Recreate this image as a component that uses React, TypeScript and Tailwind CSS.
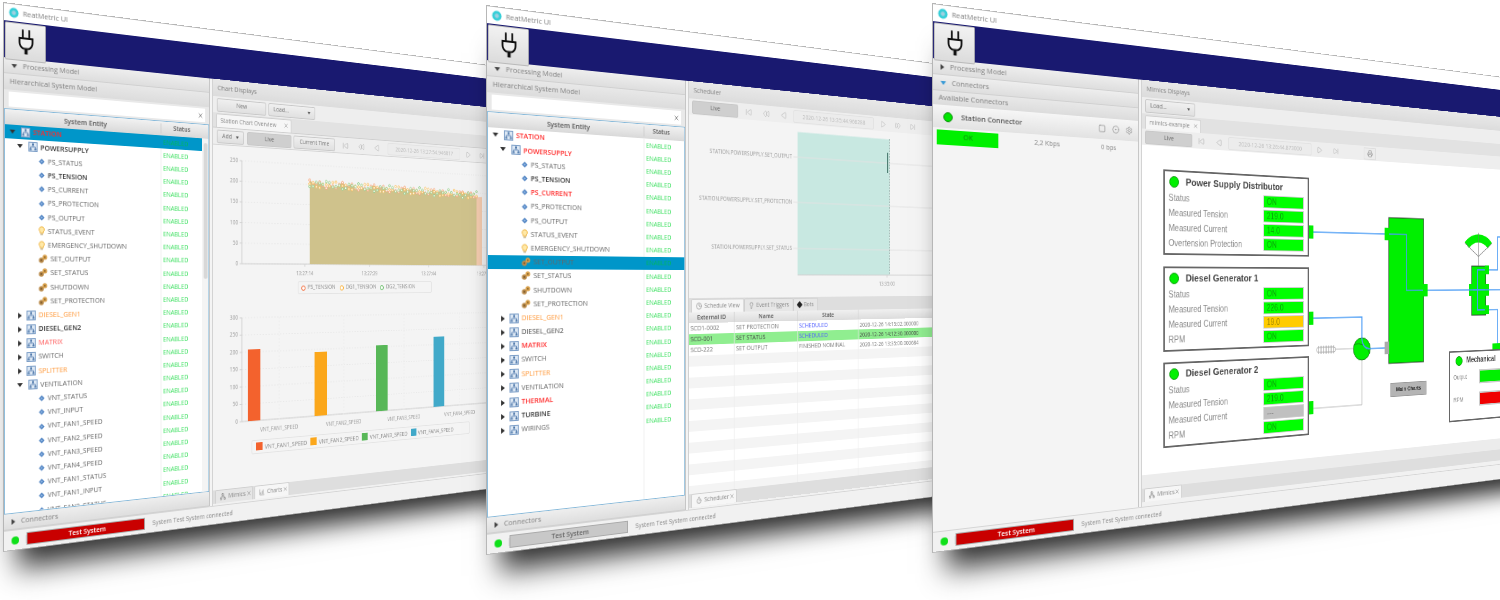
import type { ReactNode } from "react";
import {
  ChartColumnIncreasing,
  CircleDot,
  Clock,
  Lightbulb,
  Network,
  Play,
  Printer,
  Rewind,
  Settings,
  SkipForward,
  Square,
  Timer,
  X,
} from "lucide-react";

type Row = {
  label: string;
  level: number;
  icon: "sys" | "par" | "evt" | "cmd";
  open?: boolean;
  color?: string;
  bold?: boolean;
};

const sys = (label: string, extra: Partial<Row> = {}): Row => ({ label, level: 1, icon: "sys", ...extra });
const par = (label: string, extra: Partial<Row> = {}): Row => ({ label, level: 2, icon: "par", ...extra });

const powerRows = (powerColor: string, currentColor?: string): Row[] => [
  sys("POWERSUPPLY", { open: true, color: powerColor, bold: true }),
  par("PS_STATUS"),
  par("PS_TENSION", { bold: true, color: "#333" }),
  par("PS_CURRENT", currentColor ? { bold: true, color: currentColor } : {}),
  par("PS_PROTECTION"),
  par("PS_OUTPUT"),
  par("STATUS_EVENT", { icon: "evt" }),
  par("EMERGENCY_SHUTDOWN", { icon: "evt" }),
  par("SET_OUTPUT", { icon: "cmd" }),
  par("SET_STATUS", { icon: "cmd" }),
  par("SHUTDOWN", { icon: "cmd" }),
  par("SET_PROTECTION", { icon: "cmd" }),
];

const treeOne: Row[] = [
  { label: "STATION", level: 0, icon: "sys", open: true, color: "#ff2a2a", bold: true },
  ...powerRows("#333"),
  sys("DIESEL_GEN1", { color: "#ff9a3c" }),
  sys("DIESEL_GEN2", { color: "#333", bold: true }),
  sys("MATRIX", { color: "#ff5a5a" }),
  sys("SWITCH"),
  sys("SPLITTER", { color: "#ff9a3c" }),
  sys("VENTILATION", { open: true }),
  par("VNT_STATUS"),
  par("VNT_INPUT"),
  par("VNT_FAN1_SPEED"),
  par("VNT_FAN2_SPEED"),
  par("VNT_FAN3_SPEED"),
  par("VNT_FAN4_SPEED"),
  par("VNT_FAN1_STATUS"),
  par("VNT_FAN1_INPUT"),
  par("VNT_FAN2_STATUS"),
];

const treeTwo: Row[] = [
  { label: "STATION", level: 0, icon: "sys", open: true, color: "#ff2a2a", bold: true },
  ...powerRows("#ff2a2a", "#ff2a2a"),
  sys("DIESEL_GEN1", { color: "#ff9a3c" }),
  sys("DIESEL_GEN2", { color: "#444" }),
  sys("MATRIX", { color: "#ff2a2a", bold: true }),
  sys("SWITCH"),
  sys("SPLITTER", { color: "#ff9a3c" }),
  sys("VENTILATION"),
  sys("THERMAL", { color: "#ff2a2a", bold: true }),
  sys("TURBINE", { color: "#333", bold: true }),
  sys("WIRINGS"),
];

function RowIcon({ kind }: { kind: Row["icon"] }) {
  if (kind === "sys") {
    return (
      <svg width="10" height="10" viewBox="0 0 10 10" className="shrink-0">
        <rect x="0.5" y="0.5" width="9" height="9" fill="#dde8f4" stroke="#7d9fc8" />
        <path d="M5 2v3M2.5 7.5V5h5v2.5" fill="none" stroke="#5a82b2" strokeWidth="0.8" />
        <rect x="1.5" y="6.5" width="2" height="2" fill="#4f78aa" />
        <rect x="6.5" y="6.5" width="2" height="2" fill="#4f78aa" />
        <rect x="4" y="1.5" width="2" height="2" fill="#4f78aa" />
      </svg>
    );
  }
  if (kind === "par") {
    return (
      <svg width="7" height="7" viewBox="0 0 8 8" className="shrink-0">
        <path d="M4 0.5 7.5 4 4 7.5 0.5 4z" fill="#4a7fc0" />
        <circle cx="4" cy="4" r="1.2" fill="#9cc0e8" />
      </svg>
    );
  }
  if (kind === "evt") {
    return (
      <svg width="7" height="10" viewBox="0 0 8 11" className="shrink-0">
        <path d="M4 0.7a3.3 3.3 0 0 0-2 5.9V8h4V6.6a3.3 3.3 0 0 0-2-5.9z" fill="#ffe9a8" stroke="#eeb13c" />
        <rect x="2.4" y="8.6" width="3.2" height="1.8" fill="#c9b892" />
      </svg>
    );
  }
  return (
    <svg width="10" height="9" viewBox="0 0 11 10" className="shrink-0">
      <circle cx="3.4" cy="6.6" r="3" fill="#b98a4a" />
      <circle cx="7.6" cy="3.2" r="2.8" fill="#d9a04a" />
      <circle cx="3.4" cy="6.6" r="1" fill="#6e5128" />
      <circle cx="7.6" cy="3.2" r="0.9" fill="#7d5c2b" />
    </svg>
  );
}

function Tree({ rows, selected, scrollbar }: { rows: Row[]; selected: number; scrollbar?: boolean }) {
  return (
    <div className="flex h-[409px] flex-col overflow-hidden border-[1.5px] border-[#86b9da] bg-white">
      <div className="flex h-[15px] shrink-0 items-center bg-gradient-to-b from-[#f1f1f1] to-[#d9d9d9] font-semibold text-[#555]">
        <div className="w-[177px] text-center text-[7.5px]">System Entity</div>
        <div className="flex-1 border-l border-[#ccc] pr-[8px] text-center text-[7px]">Status</div>
      </div>
      <div className="flex min-h-0 flex-1">
        <div className="relative min-w-0 flex-1 overflow-hidden">
          <div className="absolute top-0 bottom-0 left-[177px] border-l border-[#eeeeee]" />
          {rows.map((row, i) => (
            <div key={row.label + i} className={`relative flex h-[14.2px] items-center ${i === selected ? "bg-[#0096c9]" : ""}`}>
              <div className="flex w-[177px] shrink-0 items-center">
                <div className={row.level === 0 ? "w-[5px]" : row.level === 1 ? "w-[13px]" : "w-[36px]"} />
                {row.icon === "sys" && (
                  <span className={`h-0 w-0 border-transparent ${row.open ? "mr-[6px] border-x-[3px] border-t-[4px] border-t-[#333]" : "mr-[5px] ml-[1px] border-y-[3px] border-l-[4px] border-l-[#333]"}`} />
                )}
                <RowIcon kind={row.icon} />
                <span
                  className={`ml-[3px] whitespace-nowrap text-[7.5px] ${row.bold ? "font-semibold" : ""}`}
                  style={{ color: row.color ?? "#666" }}
                >
                  {row.label}
                </span>
              </div>
              <span className={`ml-[3px] text-[7.2px] ${i === selected ? "text-[#00b85c]" : "text-[#3fe062]"}`}>ENABLED</span>
            </div>
          ))}
        </div>
        {scrollbar && (
          <div className="flex w-[8px] shrink-0 flex-col items-center bg-[#f4f4f4] py-[5px]">
            <div className="h-[150px] w-[5px] rounded-full bg-[#d8d8d8]" />
          </div>
        )}
      </div>
    </div>
  );
}

function Bar({ label, open, blue }: { label: string; open?: boolean; blue?: boolean }) {
  return (
    <div className="flex h-[16px] shrink-0 items-center gap-[6px] border-b border-[#d0d0d0] bg-gradient-to-b from-[#eeeeee] to-[#dedede] pl-[8px] text-[7.6px] text-[#808080]">
      <span
        className={`h-0 w-0 border-transparent ${
          open
            ? `border-x-[3px] border-t-[4px] ${blue ? "border-t-[#3b9bd6]" : "border-t-[#444]"}`
            : "border-y-[3px] border-l-[4px] border-l-[#444]"
        }`}
      />
      {label}
    </div>
  );
}

function Head({ label, h = "h-[16px]" }: { label: string; h?: string }) {
  return <div className={`${h} flex shrink-0 items-center bg-gradient-to-b from-[#e8e8e8] to-[#dcdcdc] pl-[6px] text-[7.8px] text-[#808080]`}>{label}</div>;
}

function Btn({ label, className = "", dark }: { label: string; className?: string; dark?: boolean }) {
  return (
    <div
      className={`flex h-[15px] shrink-0 items-center justify-center rounded-[2px] border border-[#c8c8c8] text-[7px] ${
        dark ? "bg-[#cfcfcf] text-[#666]" : "bg-gradient-to-b from-[#f0f0f0] to-[#e0e0e0] text-[#777]"
      } ${className}`}
    >
      {label}
    </div>
  );
}

function Drop({ label, className = "" }: { label: string; className?: string }) {
  return (
    <div className={`flex h-[15px] shrink-0 items-center justify-between rounded-[2px] border border-[#c8c8c8] bg-gradient-to-b from-[#f0f0f0] to-[#e0e0e0] px-[6px] text-[7px] text-[#777] ${className}`}>
      {label}
      <span className="h-0 w-0 border-x-[2.5px] border-t-[3px] border-transparent border-t-[#555]" />
    </div>
  );
}

function Tool({ children, className = "w-[24px]" }: { children: ReactNode; className?: string }) {
  return <div className={`flex h-[15px] shrink-0 items-center justify-center text-[#999] ${className}`}>{children}</div>;
}

function DateBox({ text, className }: { text: string; className: string }) {
  return (
    <div className={`flex h-[15px] shrink-0 items-center justify-center rounded-[2px] border border-[#e2e2e2] bg-[#ececec] text-[7.2px] whitespace-nowrap text-[#bcbcbc] ${className}`}>
      {text}
    </div>
  );
}

const ic = { size: 9, strokeWidth: 1.2 };

function SeekBack({ double, w }: { double?: boolean; w?: string }) {
  return <Tool className={w}>{double ? <Rewind {...ic} /> : <Play {...ic} className="rotate-180" />}</Tool>;
}

function Tab({ label, icon, active, className = "h-full" }: { label: string; icon?: ReactNode; active?: boolean; className?: string }) {
  return (
    <div
      className={`flex items-center gap-[3px] whitespace-nowrap rounded-t-[2px] border-x border-t border-[#cfcfcf] px-[5px] text-[7px] text-[#888] ${
        active ? "bg-[#f6f6f6]" : "bg-[#e6e6e6]"
      } ${className}`}
    >
      {icon}
      {label}
    </div>
  );
}

function Close() {
  return <X size={7} strokeWidth={1.8} className="text-[#666]" />;
}

function AppWindow({
  place,
  sidebar,
  right,
  sideClass,
  status,
}: {
  place: string;
  sidebar: ReactNode;
  right: ReactNode;
  sideClass: string;
  status: "red" | "grey";
}) {
  return (
    <div className={`absolute flex h-[550px] w-[1000px] origin-left flex-col border border-[#b5b5b5] bg-[#f4f4f4] shadow-[0_34px_28px_-16px_rgba(0,0,0,0.82)] ${place}`}>
      <div className="flex h-[17px] shrink-0 items-center gap-[4px] bg-white pl-[5px] text-[7.8px] text-[#808080]">
        <svg width="11" height="11" viewBox="0 0 12 12">
          <circle cx="6" cy="6" r="5.4" fill="#37cfd8" />
          <circle cx="6" cy="6" r="2.4" fill="#9fd0e0" />
        </svg>
        ReatMetric UI
      </div>
      <div className="h-[37px] shrink-0 bg-[#191970]">
        <div className="relative z-10 mt-[1px] ml-[1px] flex h-[38px] w-[44px] items-center justify-center rounded-[1px] border border-[#bbb] bg-gradient-to-b from-[#f2f2f2] to-[#dcdcdc]">
          <svg width="17" height="26" viewBox="0 0 17 26" fill="none" stroke="#111" strokeWidth="1.9">
            <path d="M5 1v8M12 1v8" strokeLinecap="round" />
            <path d="M1.5 9h14v4a7 7 0 0 1-4 6.4h-6A7 7 0 0 1 1.5 13z" fill="#f0f0f0" />
            <path d="M8.5 19v6" strokeWidth="3.4" />
          </svg>
        </div>
      </div>
      <div className="flex min-h-0 flex-1">
        <div className={`flex shrink-0 flex-col border-r border-[#c4c4c4] bg-[#e9e9e9] ${sideClass}`}>{sidebar}</div>
        <div className="ml-[3px] flex min-w-0 flex-1 flex-col border-l border-[#cfcfcf] bg-[#eeeeee]">{right}</div>
      </div>
      <div className="flex h-[20px] shrink-0 items-center border-t border-[#d5d5d5] bg-[#f1f1f1]">
        <div className="flex w-[24px] justify-center border-r border-[#dcdcdc]">
          <div className="size-[8px] rounded-full bg-[#0fe01a]" />
        </div>
        <div
          className={`flex h-[13px] w-[135px] items-center justify-center border border-[#aaa] text-[7.4px] font-semibold ${
            status === "red" ? "bg-[#c90000] text-white" : "bg-[#c8c8c8] text-[#666]"
          }`}
        >
          Test System
        </div>
        <div className="ml-[9px] text-[7.1px] text-[#888]">System Test System connected</div>
      </div>
    </div>
  );
}

function Sidebar({ rows, selected, scrollbar }: { rows: Row[]; selected: number; scrollbar?: boolean }) {
  return (
    <>
      <Bar label="Processing Model" open />
      <Head label="Hierarchical System Model" />
      <div className="flex h-[19px] shrink-0 items-center px-[5px]">
        <div className="flex h-[15px] flex-1 items-center justify-end bg-white pr-[2px]">
          <X size={8} strokeWidth={2} className="text-[#555]" />
        </div>
      </div>
      <Tree rows={rows} selected={selected} scrollbar={scrollbar} />
      <Bar label="Connectors" />
    </>
  );
}

function wave(i: number, seed: number) {
  return 203 + 5 * Math.sin(i * 0.63 + seed) + 5 * Math.sin(i * 1.9 + seed * 2) - i * 0.15;
}

const xs = Array.from({ length: 56 }, (_, i) => 376 + i * 4.8);
const yVal = (v: number) => 259 - v * 0.464;
const AXIS = "#d0d0d0";

function ChartOne() {
  const area = xs.map((x, i) => `${x},${yVal(wave(i, 1))}`).join(" ");
  const series = [
    { seed: 1, color: "#f79a72" },
    { seed: 3, color: "#fbb94e" },
    { seed: 5, color: "#86cc86" },
  ];
  return (
    <svg width="756" height="150" viewBox="244 127 756 150" className="shrink-0 text-[6.2px]" fontFamily="Open Sans, sans-serif">
      {[0, 50, 100, 150, 200, 250].map((v) => (
        <g key={v}>
          <line x1="282" x2="1000" y1={yVal(v)} y2={yVal(v)} stroke="#e9e9e9" strokeDasharray="2 2" />
          <text x="277" y={yVal(v) + 2} textAnchor="end" fill="#999">{v}</text>
          <line x1="279" x2="282" y1={yVal(v)} y2={yVal(v)} stroke={AXIS} />
        </g>
      ))}
      <line x1="282" x2="282" y1="143" y2="259" stroke={AXIS} />
      <line x1="282" x2="1000" y1="259" y2="259" stroke={AXIS} />
      {[369, 465, 559, 653].map((x, i) => (
        <g key={x}>
          <line x1={x} x2={x} y1="259" y2="262" stroke={AXIS} />
          <text x={x} y="272" textAnchor="middle" fill="#999">{["13:27:14", "13:27:29", "13:27:44", "13:27:59"][i]}</text>
        </g>
      ))}
      <polygon points={`376,259 ${area} 650,${yVal(190)} 650,259`} fill="#f6cdb0" />
      <polygon points={`376,259 ${area} 640,259`} fill="#cfc28c" />
      {series.map((s) =>
        xs.map((x, i) => (
          <circle key={s.seed + "-" + i} cx={x} cy={yVal(wave(i, s.seed))} r="1.5" fill="#fbf6e8" stroke={s.color} strokeWidth="0.8" />
        )),
      )}
    </svg>
  );
}

const bars = [
  { x: 290, w: 17, top: 357, color: "#f3622d" },
  { x: 383, w: 18, top: 363, color: "#fba71b" },
  { x: 475, w: 18, top: 358, color: "#57b757" },
  { x: 567, w: 18, top: 350, color: "#41a9c9" },
];

function ChartTwo() {
  return (
    <svg width="756" height="156" viewBox="244 304 756 156" className="shrink-0 text-[6.4px]" fontFamily="Open Sans, sans-serif">
      {[0, 50, 100, 150, 200, 250, 300].map((v) => {
        const y = 438 - v * 0.39;
        return (
          <g key={v}>
            <line x1="282" x2="1000" y1={y} y2={y} stroke="#e9e9e9" strokeDasharray="2 2" />
            <text x="277" y={y + 2} textAnchor="end" fill="#999">{v}</text>
            <line x1="279" x2="282" y1={y} y2={y} stroke={AXIS} />
          </g>
        );
      })}
      <line x1="282" x2="282" y1="321" y2="438" stroke={AXIS} />
      <line x1="282" x2="1000" y1="438" y2="438" stroke={AXIS} />
      {[333, 426, 519, 611].map((x, i) => (
        <g key={x}>
          <line x1={x} x2={x} y1="321" y2="441" stroke="#ececec" strokeDasharray="2 2" />
          <text x={x} y="451" textAnchor="middle" fill="#999">{`VNT_FAN${i + 1}_SPEED`}</text>
        </g>
      ))}
      {bars.map((b) => (
        <rect key={b.x} x={b.x} y={b.top} width={b.w} height={438 - b.top} fill={b.color} />
      ))}
    </svg>
  );
}

function ChartsRight() {
  return (
    <>
      <Head label="Chart Displays" h="h-[19px]" />
      <div className="flex h-[18px] shrink-0 items-center gap-[3px] pl-[5px]">
        <Btn label="New" className="w-[66px]" />
        <Drop label="Load..." className="w-[66px]" />
      </div>
      <div className="flex h-[17px] shrink-0 items-end border-b border-[#cfcfcf] bg-[#e2e2e2] pl-[4px]">
        <Tab active label="Station Chart Overview" className="h-[15px] w-[102px]" icon={null} />
        <div className="-ml-[11px] mb-[4px]"><Close /></div>
      </div>
      <div className="flex h-[18px] shrink-0 items-center pl-[5px]">
        <Drop label="Add" className="w-[36px]" />
        <Btn dark label="Live" className="ml-[4px] w-[61px]" />
        <Btn label="Current Time" className="ml-[3px] w-[60px]" />
        <Tool className="ml-[3px] w-[24px]"><SkipForward {...ic} className="rotate-180" /></Tool>
        <SeekBack double w="w-[24px]" />
        <SeekBack w="w-[24px]" />
        <DateBox text="2020-12-26 13:27:54.946817" className="ml-[5px] w-[119px]" />
        <Tool className="ml-[1px] w-[24px]"><Play {...ic} /></Tool>
        <Tool><SkipForward {...ic} /></Tool>
      </div>
      <div className="flex min-h-0 flex-1 flex-col overflow-hidden border-t border-[#d5d5d5] bg-[#f4f4f4]">
        <ChartOne />
        <div className="mt-[2px] mb-[9px] ml-[115px] flex h-[15px] w-[205px] shrink-0 items-center gap-[6px] rounded-[2px] border border-[#e4e4e4] px-[4px] text-[7px] text-[#888]">
          {[
            ["PS_TENSION", "border-[#f3622d]"],
            ["DG1_TENSION", "border-[#fba71b]"],
            ["DG2_TENSION", "border-[#57b757]"],
          ].map(([name, color]) => (
            <span key={name} className="flex items-center gap-[3px]">
              <span className={`size-[6px] rounded-full border-[1.5px] bg-white ${color}`} />
              {name}
            </span>
          ))}
        </div>
        <ChartTwo />
        <div className="ml-[51px] flex h-[16px] w-[333px] shrink-0 items-center gap-[5px] rounded-[2px] border border-[#e4e4e4] px-[5px] text-[7.2px] text-[#888]">
          {[
            ["VNT_FAN1_SPEED", "bg-[#f3622d]"],
            ["VNT_FAN2_SPEED", "bg-[#fba71b]"],
            ["VNT_FAN3_SPEED", "bg-[#57b757]"],
            ["VNT_FAN4_SPEED", "bg-[#41a9c9]"],
          ].map(([name, color]) => (
            <span key={name} className="flex items-center gap-[3px]">
              <span className={`size-[9px] ${color}`} />
              {name}
            </span>
          ))}
        </div>
      </div>
      <div className="flex h-[15px] shrink-0 gap-[1px] bg-[#dedede] pl-[3px]">
        <Tab label="Mimics" icon={<Network size={8} />} className="h-full w-[50px]" />
        <div className="-ml-[10px] flex items-center"><Close /></div>
        <Tab active label="Charts" icon={<ChartColumnIncreasing size={8} />} className="ml-[3px] h-full w-[48px]" />
        <div className="-ml-[10px] flex items-center"><Close /></div>
      </div>
      <div className="h-[2px] shrink-0 bg-[#f1f1f1]" />
    </>
  );
}

function Gantt() {
  const rows = [
    { y: 131, label: "STATION.POWERSUPPLY.SET_OUTPUT" },
    { y: 184, label: "STATION.POWERSUPPLY.SET_PROTECTION" },
    { y: 238, label: "STATION.POWERSUPPLY.SET_STATUS" },
  ];
  return (
    <svg width="765" height="203" viewBox="235 92 765 203" className="shrink-0 bg-[#f4f4f4] text-[6.4px]" fontFamily="Open Sans, sans-serif">
      <rect x="383" y="101.5" width="140" height="167.5" fill="#c8e8e1" />
      {rows.map((r) => (
        <g key={r.y}>
          <line x1="377" x2="1000" y1={r.y} y2={r.y} stroke="#e2e2e2" />
          <text x="375" y={r.y + 2} textAnchor="end" fill="#999">{r.label}</text>
        </g>
      ))}
      <line x1="523" x2="523" y1="101" y2="269" stroke="#6e8f88" strokeDasharray="2 1.5" />
      <rect x="519" y="118" width="2" height="25" fill="#4f7f74" />
      <line x1="383" x2="1000" y1="269" y2="269" stroke="#d0d0d0" />
      <line x1="519" x2="519" y1="269" y2="272" stroke="#d0d0d0" />
      <text x="519" y="282" textAnchor="middle" fill="#999">13:35:00</text>
    </svg>
  );
}

const schedule = [
  { id: "SCD1-0002", name: "SET PROTECTION", state: "SCHEDULED", start: "2020-12-26 14:15:02.000000" },
  { id: "SCD-001", name: "SET STATUS", state: "SCHEDULED", start: "2020-12-26 14:12:30.000000", hit: true },
  { id: "SCD-222", name: "SET OUTPUT", state: "FINISHED NOMINAL", start: "2020-12-26 13:35:00.000684" },
];

function SchedulerRight() {
  const blanks = Array.from({ length: 13 });
  return (
    <>
      <Head label="Scheduler" h="h-[19px]" />
      <div className="flex h-[18px] shrink-0 items-center pl-[4px]">
        <Btn dark label="Live" className="w-[61px]" />
        <Tool className="ml-[2px] w-[24px]"><SkipForward {...ic} className="rotate-180" /></Tool>
        <SeekBack double w="w-[25px]" />
        <SeekBack w="w-[24px]" />
        <DateBox text="2020-12-26 13:35:44.966288" className="ml-[2px] w-[121px]" />
        <Tool className="ml-[2px] w-[24px]"><Play {...ic} /></Tool>
        <Tool><Rewind {...ic} className="rotate-180" /></Tool>
        <Tool><SkipForward {...ic} /></Tool>
      </div>
      <Gantt />
      <div className="flex h-[16px] shrink-0 items-end bg-[#dedede] pl-[3px]">
        <Tab active label="Schedule View" className="h-[15px]" icon={<Clock size={8} />} />
        <Tab label="Event Triggers" className="h-[15px]" icon={<Lightbulb size={8} />} />
        <Tab label="Bots" className="h-[15px]" icon={<span className="size-[6px] rotate-45 bg-[#222]" />} />
      </div>
      <div className="grid h-[12px] shrink-0 grid-cols-[60px_88px_91px_1fr] bg-gradient-to-b from-[#f0f0f0] to-[#dcdcdc] text-center text-[7.2px] font-semibold text-[#555]">
        {["External ID", "Name", "State", "Start Time"].map((h) => (
          <div key={h} className="border-r border-[#d0d0d0]">{h}</div>
        ))}
      </div>
      <div className="min-h-0 flex-1 overflow-hidden bg-white">
        {schedule.map((r, i) => (
          <div key={r.id} className={`grid h-[12px] grid-cols-[60px_88px_91px_1fr] items-center text-[7.4px] ${r.hit ? "bg-[#90ee90] text-[#444]" : i % 2 ? "bg-[#f4f4f4] text-[#777]" : "bg-white text-[#777]"}`}>
            <div className="border-r border-[#e6e6e6] pl-[2px]">{r.id}</div>
            <div className="border-r border-[#e6e6e6] pl-[2px]">{r.name}</div>
            <div className={`border-r border-[#e6e6e6] pl-[2px] whitespace-nowrap ${i < 2 ? "text-[#4f5cff]" : ""}`}>{r.state}</div>
            <div className="pl-[2px] text-[7.2px]">{r.start}</div>
          </div>
        ))}
        {blanks.map((_, i) => (
          <div key={i} className={`grid h-[12px] grid-cols-[60px_88px_91px_1fr] ${i % 2 ? "bg-white" : "bg-[#f4f4f4]"}`}>
            <div className="border-r border-[#ececec]" />
            <div className="border-r border-[#ececec]" />
            <div className="border-r border-[#ececec]" />
            <div />
          </div>
        ))}
      </div>
      <div className="flex h-[15px] shrink-0 bg-[#dedede] pl-[3px]">
        <Tab active label="Scheduler" icon={<Timer size={8} />} className="h-full w-[60px]" />
        <div className="-ml-[10px] flex items-center"><Close /></div>
      </div>
      <div className="h-[2px] shrink-0 bg-[#f1f1f1]" />
    </>
  );
}

function ConnectorsSide() {
  return (
    <>
      <Bar label="Processing Model" />
      <Bar label="Connectors" open blue />
      <Head label="Available Connectors" h="h-[14px]" />
      <div className="flex h-[23px] shrink-0 items-center bg-gradient-to-b from-[#f6f6f6] to-[#e2e2e2] pl-[11px]">
        <div className="size-[10px] rounded-full border border-[#0a8a0a] bg-[#00e600]" />
        <div className="ml-[9px] flex-1 text-[7.8px] font-semibold text-[#555]">Station Connector</div>
        <div className="flex gap-[8px] pr-[7px] text-[#777]">
          <Square size={9} strokeWidth={1.5} />
          <CircleDot size={9} strokeWidth={1.5} />
          <Settings size={9} strokeWidth={1.5} />
        </div>
      </div>
      <div className="flex h-[18px] shrink-0 items-center bg-[#f4f4f4] pl-[4px] text-[7.6px] text-[#888]">
        <div className="flex h-[15px] w-[67px] items-center justify-center bg-[#00f000] text-[#0a8a0a]">OK</div>
        <div className="ml-[41px] w-[52px]">2,2 Kbps</div>
        <div className="ml-[28px]">0 bps</div>
      </div>
      <div className="flex-1 bg-[#f4f4f4]" />
    </>
  );
}

type Item = { label: string; value: string; tone?: "warn" | "off" };

function MimicCard({ title, items, className }: { title: string; items: Item[]; className: string }) {
  return (
    <div className={`absolute left-[28px] flex h-[96px] w-[209px] flex-col border-2 border-[#666] bg-white font-['Liberation_Sans',sans-serif] ${className}`}>
      <div className="flex h-[22px] shrink-0 items-center pl-[6px]">
        <div className="size-[13px] rounded-full border border-[#0a9a0a] bg-[#00f000]" />
        <div className="ml-[9px] text-[11.6px] font-bold text-[#444]">{title}</div>
      </div>
      <div className="flex flex-col gap-[2px]">
        {items.map((it) => (
          <div key={it.label} className="flex h-[15px] items-center pr-[6px] pl-[5px] text-[10px] text-[#888]">
            <div className="flex-1">{it.label}</div>
            <div
              className={`flex h-[15px] w-[61px] items-center border border-[#ccc] pl-[4px] ${
                it.tone === "warn" ? "bg-[#ffcc00] text-[#9a8200]" : it.tone === "off" ? "bg-[#c0c0c0] text-[#888]" : "bg-[#00ff00] text-[#0aa50a]"
              }`}
            >
              {it.value}
            </div>
          </div>
        ))}
      </div>
    </div>
  );
}

function MimicPipes() {
  const green = "#00f000";
  const blue = "#4a9cf5";
  return (
    <svg width="754" height="367" viewBox="246 127 754 367" className="absolute top-0 left-0">
      <rect x="613" y="198" width="61" height="186" fill={green} stroke="#333" />
      <rect x="762" y="259" width="27" height="66" fill={green} stroke="#333" />
      <circle cx="568" cy="364" r="14" fill={green} stroke="#1a7a1a" />
      <path d="M555 358a22 22 0 0 1 26 12" fill="none" stroke="#1a7a1a" />
      <path d="M487 434H568V378" fill="none" stroke="#bbb" />
      <path d="M525 363H554" stroke="#bbb" />
      <path d="M498 358v10M502 358v10M506 358v10M510 358v10M514 358v10M518 358v10M522 358v10" stroke="#999" />
      <rect x="495" y="360" width="30" height="6" rx="3" fill="none" stroke="#aaa" />
      <path d="M490 219H644V291H1000M490 324H568V352Q570 364 581 364H609" fill="none" stroke={blue} strokeWidth="1.6" />
      <path d="M795 264H812V219H1000M795 318H812V368M795 264H773V318H795" fill="none" stroke={blue} strokeWidth="1.6" />
      {[
        [482, 211, 8, 16],
        [606, 211, 8, 16],
        [673, 283, 8, 16],
        [757, 283, 8, 16],
        [787, 283, 8, 16],
        [787, 258, 8, 12],
        [787, 312, 8, 12],
        [802, 364, 16, 9],
        [482, 316, 8, 16],
        [482, 425, 8, 16],
      ].map(([x, y, w, h]) => (
        <rect key={`${x}-${y}`} x={x} y={y} width={w} height={h} fill={green} />
      ))}
      <path d="M757 291H795M773 264V318M787 264H773M787 318H773" fill="none" stroke={blue} strokeWidth="1.6" />
      <rect x="606" y="356" width="8" height="16" fill="#aaa" />
      <path d="M753 231A31 31 0 0 1 797 231" fill="none" stroke={green} strokeWidth="11" />
      <path d="M749 228 775 246 801 228M775 214V259" fill="none" stroke="#777" />
    </svg>
  );
}

const rpmOn: Item = { label: "RPM", value: "ON" };

function MimicsRight() {
  return (
    <>
      <Head label="Mimics Displays" h="h-[19px]" />
      <div className="flex h-[18px] shrink-0 items-center pl-[4px]">
        <Drop label="Load..." className="w-[67px]" />
      </div>
      <div className="flex h-[17px] shrink-0 items-end bg-[#e2e2e2] pl-[4px]">
        <Tab active label="mimics-example" className="h-[15px] w-[75px]" />
        <div className="-ml-[11px] mb-[4px]"><Close /></div>
      </div>
      <div className="flex h-[18px] shrink-0 items-center pl-[4px]">
        <Btn dark label="Live" className="w-[63px]" />
        <Tool className="w-[25px]"><SkipForward {...ic} className="rotate-180" /></Tool>
        <SeekBack w="w-[25px]" />
        <DateBox text="2020-12-26 13:26:44.873000" className="w-[124px]" />
        <Tool className="w-[25px]"><Play {...ic} /></Tool>
        <Tool className="w-[26px]"><SkipForward {...ic} /></Tool>
        <Tool className="ml-[33px] w-[20px] border border-[#ddd] bg-[#ececec]"><Printer size={9} strokeWidth={1.4} className="text-[#666]" /></Tool>
      </div>
      <div className="relative h-[367px] shrink-0 overflow-hidden bg-white">
        <MimicPipes />
        <MimicCard
          title="Power Supply Distributor"
          className="top-[26px]"
          items={[
            { label: "Status", value: "ON" },
            { label: "Measured Tension", value: "219.0" },
            { label: "Measured Current", value: "14.0" },
            { label: "Overtension Protection", value: "ON" },
          ]}
        />
        <MimicCard
          title="Diesel Generator 1"
          className="top-[135px]"
          items={[
            { label: "Status", value: "ON" },
            { label: "Measured Tension", value: "226.0" },
            { label: "Measured Current", value: "19.0", tone: "warn" },
            rpmOn,
          ]}
        />
        <MimicCard
          title="Diesel Generator 2"
          className="top-[243px]"
          items={[
            { label: "Status", value: "ON" },
            { label: "Measured Tension", value: "219.0" },
            { label: "Measured Current", value: "---", tone: "off" },
            rpmOn,
          ]}
        />
        <div className="absolute top-[282px] left-[370px] flex h-[18px] w-[63px] items-center justify-center border border-[#999] bg-[#b4b4b4] font-['Liberation_Sans',sans-serif] text-[7.6px] font-bold text-[#222]">
          Main Charts
        </div>
        <div className="absolute top-[245px] left-[474px] flex h-[94px] w-[260px] flex-col border-2 border-[#666] bg-white font-['Liberation_Sans',sans-serif]">
          <div className="flex h-[22px] items-center pl-[10px]">
            <div className="size-[13px] rounded-full border border-[#0a9a0a] bg-[#00f000]" />
            <div className="ml-[7px] whitespace-nowrap text-[10.4px] font-bold text-[#444]">Mechanical</div>
          </div>
          <div className="flex h-[22px] items-center pl-[6px] text-[8.4px] text-[#888]">
            <div className="w-[48px]">Output</div>
            <div className="h-[19px] w-[120px] border-2 border-[#ccc] bg-[#00f000]" />
          </div>
          <div className="mt-[8px] flex h-[22px] items-center pl-[6px] text-[8.4px] text-[#888]">
            <div className="w-[48px]">RPM</div>
            <div className="h-[19px] w-[120px] border-2 border-[#ccc] bg-[#f00000]" />
          </div>
        </div>
      </div>
      <div className="h-[15px] shrink-0 bg-[#ececec]" />
      <div className="flex h-[15px] shrink-0 bg-[#dedede] pl-[3px]">
        <Tab active label="Mimics" icon={<Network size={8} />} className="h-full w-[50px]" />
        <div className="-ml-[10px] flex items-center"><Close /></div>
      </div>
      <div className="h-[6px] shrink-0 bg-[#f1f1f1]" />
    </>
  );
}

export default function App() {
  return (
    <div className="relative h-[600px] w-[1500px] overflow-hidden bg-white font-['Open_Sans',sans-serif] blur-[0.5px]">
      <AppWindow
        place="top-[2px] left-[3px] [transform:perspective(689px)_rotateY(18deg)]"
        sideClass="w-[240px]"
        sidebar={<Sidebar rows={treeOne} selected={0} scrollbar />}
        right={<ChartsRight />}
        status="red"
      />
      <AppWindow
        place="top-[5px] left-[486px] [transform:perspective(689px)_rotateY(18deg)]"
        sideClass="w-[231px]"
        sidebar={<Sidebar rows={treeTwo} selected={9} />}
        right={<SchedulerRight />}
        status="grey"
      />
      <AppWindow
        place="top-[3px] left-[932px] [transform:perspective(689px)_rotateY(18deg)]"
        sideClass="w-[240px]"
        sidebar={<ConnectorsSide />}
        right={<MimicsRight />}
        status="red"
      />
    </div>
  );
}
